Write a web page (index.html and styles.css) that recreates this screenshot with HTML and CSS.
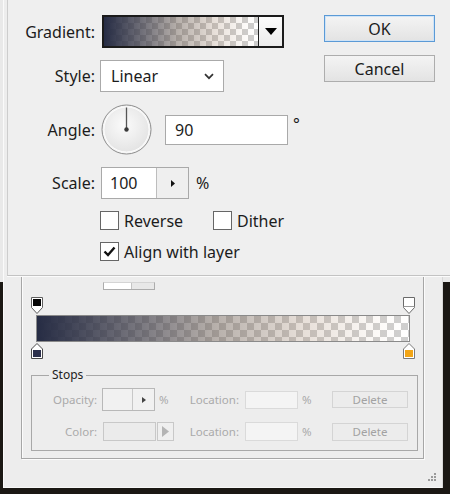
FILE: index.html
```html
<!DOCTYPE html>
<html lang="en">
<head>
<meta charset="utf-8">
<title>Gradient</title>
<link rel="stylesheet" href="styles.css">
</head>
<body>
<div class="stage">
  <div class="editor">
    <div class="panel">
      <div class="smooth"><span class="smooth-field"></span><span class="smooth-spin"></span></div>
      <div class="track">
        <div class="stop-row top">
          <svg class="stop" width="12" height="17" viewBox="0 0 12 17"><path d="M0.5 0.5H11.5V10.5L6 16.5L0.5 10.5Z" fill="#fff" stroke="#5e5e5e"/><rect x="2" y="2" width="8" height="7" fill="#050505"/></svg>
          <svg class="stop" width="12" height="17" viewBox="0 0 12 17"><path d="M0.5 0.5H11.5V10.5L6 16.5L0.5 10.5Z" fill="#fff" stroke="#6a6a6a"/><path d="M0.5 9.5H11.5" stroke="#9a9a9a"/></svg>
        </div>
        <div class="bar"></div>
        <div class="stop-row bottom">
          <svg class="stop" width="12" height="16" viewBox="0 0 12 16"><path d="M6 0.5L11.5 6V15.5H0.5V6Z" fill="#fff" stroke="#4a4a4a"/><rect x="2" y="7" width="8" height="7" fill="#2b2f4b"/></svg>
          <svg class="stop" width="12" height="16" viewBox="0 0 12 16"><path d="M6 0.5L11.5 6V15.5H0.5V6Z" fill="#fff" stroke="#7a7a7a"/><rect x="2" y="7" width="8" height="7" fill="#f2a516"/></svg>
        </div>
      </div>
      <fieldset class="stops">
        <legend>Stops</legend>
        <div class="sgrid">
          <span class="slbl">Opacity:</span>
          <div class="sctl">
            <span class="ospin"><span class="ospin-field"></span><span class="ospin-btn"><svg width="4" height="6" viewBox="0 0 4 6"><path d="M0 0L4 3L0 6Z" fill="#444"/></svg></span></span>
            <span class="pct">%</span>
          </div>
          <span class="slbl">Location:</span>
          <span class="loc"></span>
          <span class="pct2">%</span>
          <span class="del">Delete</span>

          <span class="slbl">Color:</span>
          <div class="sctl color">
            <span class="cbox"></span>
            <span class="cbtn"><svg width="7" height="11" viewBox="0 0 7 11"><path d="M0 0L7 5.5L0 11Z" fill="#b4b4b4"/></svg></span>
          </div>
          <span class="slbl">Location:</span>
          <span class="loc short"></span>
          <span class="pct2">%</span>
          <span class="del short">Delete</span>
        </div>
      </fieldset>
    </div>
    <svg class="grip" width="9" height="8" viewBox="0 0 9 8">
      <rect x="7" y="0" width="2" height="2" fill="#9a9a9a"/>
      <rect x="4" y="3" width="2" height="2" fill="#9a9a9a"/>
      <rect x="7" y="3" width="2" height="2" fill="#9a9a9a"/>
      <rect x="1" y="6" width="2" height="2" fill="#9a9a9a"/>
      <rect x="4" y="6" width="2" height="2" fill="#9a9a9a"/>
      <rect x="7" y="6" width="2" height="2" fill="#9a9a9a"/>
    </svg>
  </div>

  <div class="dialog">
    <div class="form">
      <span class="lab">Gradient:</span>
      <div class="swatch">
        <span class="sw-grad"></span>
        <span class="sw-drop"><svg width="12" height="7" viewBox="0 0 12 7"><path d="M0 0H12L6 7Z" fill="#000"/></svg></span>
      </div>

      <span class="lab">Style:</span>
      <div class="select">
        <span>Linear</span>
        <svg width="10" height="7" viewBox="0 0 10 7"><path d="M1 1.2L5 5.2L9 1.2" fill="none" stroke="#333" stroke-width="1.7"/></svg>
      </div>

      <span class="lab">Angle:</span>
      <div class="angle-row">
        <svg class="dial" width="51" height="51" viewBox="0 0 51 51">
          <defs>
            <radialGradient id="dg" cx="0.45" cy="0.4" r="0.65">
              <stop offset="0" stop-color="#fbfbfb"/>
              <stop offset="1" stop-color="#e2e2e2"/>
            </radialGradient>
          </defs>
          <circle cx="25.5" cy="25.5" r="24.5" fill="#f4f4f4" stroke="#8d8d8d"/>
          <circle cx="25.5" cy="25.5" r="22.5" fill="url(#dg)" stroke="#fcfcfc"/>
          <line x1="25.5" y1="25.5" x2="25.5" y2="3.5" stroke="#555" stroke-width="1.3"/>
          <circle cx="25.5" cy="25.5" r="2.2" fill="#3a3a3a"/>
        </svg>
        <span class="field angle-field">90</span>
        <span class="deg">°</span>
      </div>

      <span class="lab">Scale:</span>
      <div class="scale-row">
        <span class="scale-box"><span class="scale-field">100</span><span class="scale-spin"><svg width="4" height="7" viewBox="0 0 4 7"><path d="M0 0L4 3.5L0 7Z" fill="#111"/></svg></span></span>
        <span class="scale-pct">%</span>
      </div>

      <span></span>
      <div class="checks">
        <span class="chk wide"><span class="cb"></span><span class="cb-text">Reverse</span></span>
        <span class="chk"><span class="cb"></span><span class="cb-text">Dither</span></span>
      </div>

      <span></span>
      <div class="checks">
        <span class="chk"><span class="cb"><svg width="17" height="17" viewBox="0 0 17 17"><path d="M3.5 8.5L7 12L13.5 4.5" fill="none" stroke="#111" stroke-width="2.4"/></svg></span><span class="cb-text">Align with layer</span></span>
      </div>
    </div>

    <div class="btns">
      <span class="btn ok">OK</span>
      <span class="btn">Cancel</span>
    </div>
  </div>
</div>
</body>
</html>
```

FILE: styles.css
```css
* { box-sizing: border-box; }
html, body { margin: 0; padding: 0; }
body {
  width: 450px;
  height: 494px;
  overflow: hidden;
  font-family: "Noto Sans", "Open Sans", sans-serif;
  color: #1c1c1c;
}

.stage {
  position: relative;
  width: 450px;
  height: 494px;
  padding: 0 7px 6px 3px;
  background: linear-gradient(to bottom, #e9e9e9 0, #e9e9e9 282px, #1b1814 282px);
}

/* gradient editor window (behind) */
.editor {
  position: relative;
  height: 488px;
  background: #ededed;
  box-shadow: inset 1px 0 0 #fafafa, inset -1px 0 0 #d8d8d8, inset 0 -1px 0 #f8f8f8;
  padding-top: 250px;
}
.panel {
  margin-left: 18px;
  width: 403px;
  border: 1px solid #a6a6a6;
  box-shadow: 1px 1px 0 #fbfbfb, inset 1px 1px 0 #fbfbfb;
  padding-bottom: 7px;
}
.smooth {
  display: flex;
  margin: 31px 0 0 81px;
  width: 52px;
  height: 8px;
  border: 1px solid #acacac;
  border-top-color: #d4d4d4;
}
.smooth-field { width: 28px; background: #fff; border-right: 1px solid #c4c4c4; }
.smooth-spin { flex: 1; background: #e8e8e8; }

.track { margin: 7px 0 0 9px; width: 384px; }
.stop-row { display: flex; justify-content: space-between; }
.stop-row.top { height: 17px; }
.stop-row.bottom { height: 16px; margin-top: 1px; }
.stop { display: block; }

.bar {
  margin: 1px 5px 0;
  height: 27px;
  border: 1px solid #8a8a8a;
  background-color: #fff;
  background-image:
    linear-gradient(to right, rgba(38,44,68,1) 0%, rgba(62,62,76,0.78) 22%, rgba(112,98,88,0.5) 48%, rgba(165,135,110,0.26) 72%, rgba(215,175,135,0.06) 92%, rgba(230,185,140,0) 100%),
    linear-gradient(45deg, #cfcfcf 25%, transparent 25%, transparent 75%, #cfcfcf 75%),
    linear-gradient(45deg, #cfcfcf 25%, transparent 25%, transparent 75%, #cfcfcf 75%);
  background-size: 100% 100%, 14px 14px, 14px 14px;
  background-position: 0 0, 0 0, 7px 7px;
}

.stops {
  margin: 9px 0 0 9px;
  width: 387px;
  min-width: 0;
  padding: 6px 0 9px;
  border: 1px solid #a8a8a8;
}
.stops legend {
  margin-left: 17px;
  padding: 0 3px;
  font-size: 12px;
  line-height: 14px;
  color: #222;
}
.sgrid {
  display: grid;
  grid-template-columns: 65px 78px 64px 62px 31px 76px;
  grid-template-rows: 23px 19px;
  row-gap: 11px;
  align-items: center;
  font-size: 11.5px;
  color: #aaaaaa;
}
.slbl { text-align: right; line-height: 1; }
.sctl { display: flex; align-items: center; padding-left: 5px; }
.sctl.color { padding-left: 6px; }
.ospin {
  display: flex;
  width: 53px;
  height: 23px;
  border: 1px solid #b8b8b8;
  background: #f1f1f1;
}
.ospin-field { width: 30px; border-right: 1px solid #c8c8c8; }
.ospin-btn { flex: 1; display: flex; align-items: center; justify-content: center; }
.ospin-btn svg { display: block; }
.pct { margin-left: 4px; line-height: 1; }
.pct2 { padding-left: 1px; line-height: 1; }
.loc {
  margin-left: 6px;
  width: 53px;
  height: 18px;
  border: 1px solid #dadada;
  background: #f4f4f4;
}
.loc.short { height: 19px; }
.cbox {
  width: 53px;
  height: 19px;
  border: 1px solid #c8c8c8;
  background: #ebebeb;
}
.cbtn {
  margin-left: 1px;
  width: 17px;
  height: 19px;
  border: 1px solid #c8c8c8;
  background: #efefef;
  display: flex;
  align-items: center;
  justify-content: center;
}
.cbtn svg { display: block; }
.del {
  width: 76px;
  height: 17px;
  border: 1px solid #d4d4d4;
  background: #ececec;
  display: flex;
  align-items: center;
  justify-content: center;
  color: #a2a2a2;
  line-height: 1;
}
.del.short { height: 18px; }

.grip { position: absolute; right: 7px; bottom: 7px; display: block; }

/* gradient overlay dialog (front) */
.dialog {
  position: absolute;
  left: 7px;
  top: 0;
  width: 443px;
  height: 276px;
  background: #efefef;
  border-left: 1px solid #cdcdcd;
  border-bottom: 1px solid #c3c3c3;
  box-shadow: 0 1px 0 #fbfbfb;
  display: flex;
  align-items: flex-start;
  padding-top: 15px;
}
.form {
  display: grid;
  grid-template-columns: 87px auto;
  grid-template-rows: 33px 32px 51px 32px 19px 19px;
  column-gap: 5px;
  row-gap: 12px;
  align-items: center;
  font-size: 16px;
  line-height: 1;
}
.lab { text-align: right; }

.swatch {
  margin-left: 2px;
  width: 182px;
  height: 33px;
  border: 2px solid #1b1b1b;
  display: flex;
}
.sw-grad {
  flex: 1;
  background-color: #fff;
  background-image:
    linear-gradient(to right, rgba(38,44,68,1) 0%, rgba(62,62,76,0.78) 22%, rgba(112,98,88,0.5) 48%, rgba(165,135,110,0.26) 72%, rgba(215,175,135,0.06) 92%, rgba(230,185,140,0) 100%),
    linear-gradient(45deg, #cdcdcd 25%, transparent 25%, transparent 75%, #cdcdcd 75%),
    linear-gradient(45deg, #cdcdcd 25%, transparent 25%, transparent 75%, #cdcdcd 75%);
  background-size: 100% 100%, 12px 12px, 12px 12px;
  background-position: 0 0, 0 0, 6px 6px;
}
.sw-drop {
  width: 24px;
  border-left: 1px solid #222;
  background: linear-gradient(#fbfbfb, #ececec);
  display: flex;
  align-items: center;
  justify-content: center;
}
.sw-drop svg { display: block; }

.select {
  width: 124px;
  height: 32px;
  border: 1px solid #aaaaaa;
  background: #fff;
  display: flex;
  align-items: center;
  justify-content: space-between;
  padding: 0 9px 0 10px;
}
.select svg { display: block; }

.angle-row { display: flex; align-items: center; height: 51px; }
.dial { display: block; margin-left: 1px; }
.field {
  height: 30px;
  border: 1px solid #a9a9a9;
  background: #fff;
  display: flex;
  align-items: center;
}
.angle-field { margin-left: 13px; width: 123px; padding-left: 9px; }
.deg { align-self: flex-start; margin: 12px 0 0 5px; font-size: 16px; }

.scale-row { display: flex; align-items: center; }
.scale-box {
  margin-left: 1px;
  width: 88px;
  height: 32px;
  border: 1px solid #a9a9a9;
  display: flex;
}
.scale-field {
  width: 55px;
  background: #fff;
  border-right: 1px solid #bdbdbd;
  display: flex;
  align-items: center;
  padding-left: 8px;
}
.scale-spin {
  flex: 1;
  background: #efefef;
  display: flex;
  align-items: center;
  justify-content: center;
}
.scale-spin svg { display: block; }
.scale-pct { margin-left: 7px; }

.checks { display: flex; align-items: center; }
.chk { display: flex; align-items: center; }
.chk.wide { width: 113px; }
.cb {
  width: 19px;
  height: 19px;
  border: 1px solid #666;
  background: #fff;
  display: flex;
  align-items: center;
  justify-content: center;
}
.cb svg { display: block; }
.cb-text { margin-left: 5px; }

.btns {
  margin-left: auto;
  margin-right: 15px;
  width: 111px;
  display: flex;
  flex-direction: column;
  gap: 13px;
}
.btn {
  height: 27px;
  border: 1px solid #adadad;
  background: linear-gradient(#f4f4f4, #e3e3e3);
  display: flex;
  align-items: center;
  justify-content: center;
  font-size: 16px;
  line-height: 1;
}
.btn.ok { border-color: #5b9ad6; box-shadow: inset 0 0 0 1px #cfe3f6; }
```
